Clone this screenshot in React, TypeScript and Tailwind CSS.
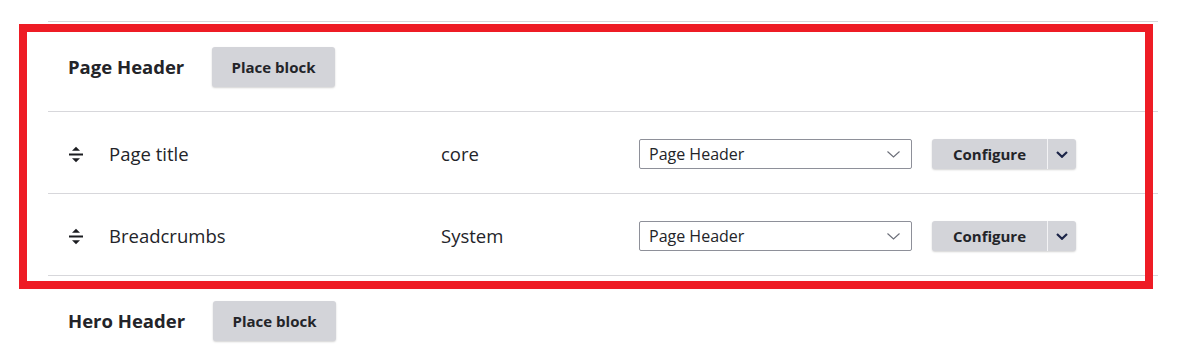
const font = "font-['Open_Sans','Noto_Sans',sans-serif]";

const DragHandle = () => (
  <svg width="14" height="17" viewBox="0 0 14 17" className="block">
    <path d="M3 4.8 L7 0.8 L11 4.8 Z" fill="#1b1c20" />
    <rect x="0" y="7.5" width="14" height="2" fill="#1b1c20" />
    <path d="M3 12.2 L7 16.2 L11 12.2 Z" fill="#1b1c20" />
  </svg>
);

const RegionHeader = ({ title, last, offset }: { title: string; last?: boolean; offset: string }) => (
  <div className={`flex items-center pl-[20px] pt-[25px] pb-[24px] ${last ? "" : "border-b border-[#d7d7db]"}`}>
    <h3 className={`${offset} text-[18.5px] font-bold text-[#232429]`}>{title}</h3>
    <button className="h-[40px] w-[123px] rounded-[3px] bg-[#d3d4d9] text-[15px] font-bold text-[#232429] shadow-[0_1px_2px_rgba(0,0,0,0.18)]">
      Place block
    </button>
  </div>
);

const BlockRow = ({ label, category }: { label: string; category: string }) => (
  <div className="flex items-center border-b border-[#d7d7db] pl-[21px] pt-[27px] pb-[24px]">
    <div className="w-[40px]">
      <DragHandle />
    </div>
    <div className="w-[332px] text-[18.5px] text-[#232429]">{label}</div>
    <div className="w-[198px] text-[18.5px] text-[#232429]">{category}</div>
    <div className="relative mr-[20px] flex h-[30px] w-[273px] items-center rounded-[2px] border border-[#8e9099] bg-white pl-[9px] text-[16px] text-[#232429]">
      Page Header
      <svg width="13" height="7" viewBox="0 0 13 7" className="absolute right-[11px] top-[11px]">
        <path d="M0.5 0.5 L6.5 6 L12.5 0.5" fill="none" stroke="#6b6e78" strokeWidth="1.1" />
      </svg>
    </div>
    <div className="flex h-[30px] overflow-hidden rounded-[3px] bg-[#d3d4d9] shadow-[0_1px_2px_rgba(0,0,0,0.18)]">
      <button className="w-[115px] text-[15px] font-bold text-[#232429]">Configure</button>
      <div className="w-px bg-[#f3f3f5]" />
      <button className="flex w-[28px] items-center justify-center">
        <svg width="12" height="7" viewBox="0 0 12 7">
          <path d="M1 1 L6 5.8 L11 1" fill="none" stroke="#1c2548" strokeWidth="2.2" />
        </svg>
      </button>
    </div>
  </div>
);

export default function App() {
  return (
    <div className={`relative h-[351px] w-[1187px] overflow-hidden bg-white ${font}`}>
      <div className="ml-[48px] w-[1110px]">
        <div className="h-[22px] border-b border-[#d7d7db]" />
        <RegionHeader title="Page Header" offset="w-[144px]" />
        <BlockRow label="Page title" category="core" />
        <BlockRow label="Breadcrumbs" category="System" />
        <RegionHeader title="Hero Header" offset="w-[145px]" last />
      </div>
      <div className="pointer-events-none absolute left-[19px] top-[24px] h-[265px] w-[1134px] border-8 border-[#ee1c25]" />
    </div>
  );
}
